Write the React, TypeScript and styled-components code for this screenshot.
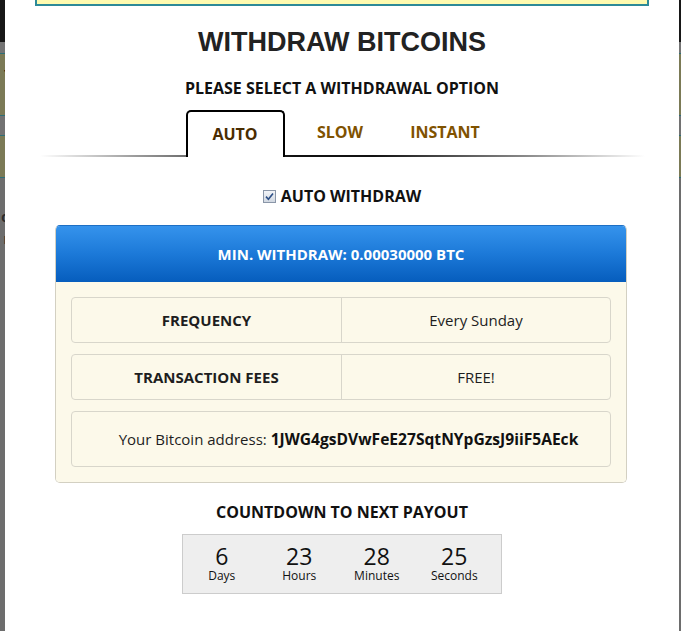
import React from "react";
import styled, { createGlobalStyle } from "styled-components";

const GlobalStyle = createGlobalStyle`
  html, body {
    margin: 0;
    padding: 0;
  }
  body {
    background: #6d6d6d;
    font-family: "Open Sans", "DejaVu Sans", sans-serif;
    color: #1c1c1c;
  }
`;

const units = [
  { value: "6", label: "Days" },
  { value: "23", label: "Hours" },
  { value: "28", label: "Minutes" },
  { value: "25", label: "Seconds" },
];

function App() {
  return (
    <>
      <GlobalStyle />
      <Page>
        <Edge width={5}>
          <Band h={42} tone="#171717" />
          <Band h={11} tone="#747474" />
          <Band h={63} tone="#7b7a56" line>
            <Peek top={12}>t</Peek>
          </Band>
          <Band h={19} tone="#727272" />
          <Band h={43} tone="#7b7a56" line />
          <Band h={400} tone="#6d6d6d">
            <Peek top={32} light>c</Peek>
            <Peek top={8} light>r</Peek>
          </Band>
        </Edge>

        <Modal>
          <NoticeTail />
          <Title>WITHDRAW BITCOINS</Title>
          <Subtitle>PLEASE SELECT A WITHDRAWAL OPTION</Subtitle>

          <TabBar>
            <Tab active>AUTO</Tab>
            <Tab>SLOW</Tab>
            <Tab>INSTANT</Tab>
          </TabBar>

          <CheckRow>
            <svg width="13" height="13" viewBox="0 0 13 13">
              <defs>
                <linearGradient id="cbFill" x1="0" y1="0" x2="0" y2="1">
                  <stop offset="0" stopColor="#f4f6f9" />
                  <stop offset="1" stopColor="#cfd6e0" />
                </linearGradient>
              </defs>
              <rect x="0.5" y="0.5" width="12" height="12" fill="url(#cbFill)" stroke="#8a96a8" />
              <path d="M3 6.6 L5.4 9.2 L10 3.4" fill="none" stroke="#2d4f86" strokeWidth="1.6" />
            </svg>
            AUTO WITHDRAW
          </CheckRow>

          <Panel>
            <PanelHead>MIN. WITHDRAW: 0.00030000 BTC</PanelHead>
            <PanelBody>
              <InfoRow>
                <Cell strong>FREQUENCY</Cell>
                <Cell divided>Every Sunday</Cell>
              </InfoRow>
              <InfoRow>
                <Cell strong>TRANSACTION FEES</Cell>
                <Cell divided>FREE!</Cell>
              </InfoRow>
              <AddressRow>
                Your Bitcoin address:&nbsp;<b>1JWG4gsDVwFeE27SqtNYpGzsJ9iiF5AEck</b>
              </AddressRow>
            </PanelBody>
          </Panel>

          <CountTitle>COUNTDOWN TO NEXT PAYOUT</CountTitle>
          <Countdown>
            {units.map((u) => (
              <Unit key={u.label}>
                <UnitValue>{u.value}</UnitValue>
                <UnitLabel>{u.label}</UnitLabel>
              </Unit>
            ))}
          </Countdown>
        </Modal>

        <Edge width={2}>
          <Band h={42} tone="#171717" />
          <Band h={11} tone="#747474" />
          <Band h={63} tone="#7b7a56" line />
          <Band h={19} tone="#727272" />
          <Band h={43} tone="#7b7a56" line />
          <Band h={400} tone="#6d6d6d" />
        </Edge>
      </Page>
    </>
  );
}

const Page = styled.div`
  display: flex;
  height: 631px;
  overflow: hidden;
`;

const Edge = styled.div<{ width: number }>`
  width: ${(p) => p.width}px;
  flex-shrink: 0;
  display: flex;
  flex-direction: column;
  overflow: hidden;
`;

const Band = styled.div<{ h: number; tone: string; line?: boolean }>`
  height: ${(p) => p.h}px;
  flex-shrink: 0;
  background: ${(p) => p.tone};
  box-sizing: border-box;
  border-top: ${(p) => (p.line ? "1px solid #2e6f78" : "none")};
  border-bottom: ${(p) => (p.line ? "1px solid #2e6f78" : "none")};
  display: flex;
  flex-direction: column;
  align-items: flex-end;
`;

const Peek = styled.span<{ top: number; light?: boolean }>`
  margin-top: ${(p) => p.top}px;
  font: bold 14px/14px "Liberation Sans", sans-serif;
  color: ${(p) => (p.light ? "#2a2a2a" : "#000")};
  margin-right: -4px;
`;

const Modal = styled.div`
  flex: 1;
  background: #fff;
  display: flex;
  flex-direction: column;
  align-items: center;
  overflow: hidden;
`;

const NoticeTail = styled.div`
  align-self: stretch;
  margin: 0 30px;
  height: 4px;
  background: #fefbb0;
  border: 2px solid #2d8a98;
  border-top: none;
`;

const Title = styled.h1`
  margin: 21px 0 0;
  font: bold 27px/31px "Liberation Sans", Arial, sans-serif;
  color: #222;
`;

const Subtitle = styled.h2`
  margin: 19px 0 0;
  font-size: 16px;
  line-height: 22px;
  font-weight: 700;
  color: #111;
`;

const TabBar = styled.div`
  align-self: stretch;
  margin: 11px 34px 0 35px;
  padding-right: 5px;
  display: flex;
  justify-content: center;
  gap: 6px;
  background: linear-gradient(
      to right,
      rgba(0, 0, 0, 0) 0%,
      #9a9a9a 16%,
      #111 42%,
      #111 55%,
      #888 80%,
      rgba(0, 0, 0, 0) 100%
    )
    bottom / 100% 2px no-repeat;
`;

const Tab = styled.div<{ active?: boolean }>`
  width: 99px;
  box-sizing: border-box;
  text-align: center;
  font-size: 16px;
  line-height: 22px;
  font-weight: 700;
  border: 2px solid ${(p) => (p.active ? "#000" : "transparent")};
  border-bottom: none;
  border-radius: 5px 5px 0 0;
  background: ${(p) => (p.active ? "#fff" : "transparent")};
  padding: ${(p) => (p.active ? "11px 0 12px" : "9px 0 14px")};
  color: ${(p) => (p.active ? "#4a2c00" : "#805200")};
`;

const CheckRow = styled.div`
  margin-top: 28px;
  display: flex;
  align-items: center;
  gap: 5px;
  font-size: 16px;
  line-height: 22px;
  font-weight: 700;
  color: #111;
  svg {
    margin-top: 1px;
  }
`;

const Panel = styled.div`
  align-self: stretch;
  margin: 18px 52px 0 50px;
  border-radius: 5px;
  overflow: hidden;
  border: 1px solid #d3d0c2;
  border-top-color: #1d6fc4;
`;

const PanelHead = styled.div`
  height: 56px;
  margin: 0 -1px;
  display: flex;
  align-items: center;
  justify-content: center;
  background: linear-gradient(to bottom, #3593ec 0%, #1c79d8 50%, #065dbd 100%);
  border-left: 1px solid #1a64b9;
  border-right: 1px solid #1a64b9;
  color: #fff;
  font-size: 15px;
  font-weight: 700;
`;

const PanelBody = styled.div`
  background: #fcf9ea;
  padding: 15px 15px 15px;
  display: flex;
  flex-direction: column;
  gap: 11px;
`;

const InfoRow = styled.div`
  height: 46px;
  box-sizing: border-box;
  display: grid;
  grid-template-columns: 1fr 1fr;
  border: 1px solid #d8d6cb;
  border-radius: 4px;
`;

const Cell = styled.div<{ strong?: boolean; divided?: boolean }>`
  display: flex;
  align-items: center;
  justify-content: center;
  font-size: 15px;
  font-weight: ${(p) => (p.strong ? 700 : 400)};
  color: #1e1e1e;
  border-left: ${(p) => (p.divided ? "1px solid #d8d6cb" : "none")};
`;

const AddressRow = styled.div`
  height: 56px;
  box-sizing: border-box;
  padding-left: 15px;
  display: flex;
  align-items: center;
  justify-content: center;
  border: 1px solid #d8d6cb;
  border-radius: 4px;
  font-size: 15px;
  color: #1e1e1e;
  b {
    font-size: 15.6px;
    font-weight: 700;
    color: #111;
  }
`;

const CountTitle = styled.h3`
  margin: 18px 0 0;
  font-size: 16px;
  line-height: 22px;
  font-weight: 700;
  color: #111;
`;

const Countdown = styled.div`
  margin-top: 11px;
  width: 320px;
  box-sizing: border-box;
  display: flex;
  padding: 9px 8px 10px 0;
  background: #eeeeee;
  border: 1px solid #cccccc;
`;

const Unit = styled.div`
  width: 78px;
  display: flex;
  flex-direction: column;
  align-items: center;
  color: #111;
`;

const UnitValue = styled.div`
  font-size: 23px;
  line-height: 24px;
`;

const UnitLabel = styled.div`
  font-size: 12px;
  line-height: 15px;
`;

export default App;
